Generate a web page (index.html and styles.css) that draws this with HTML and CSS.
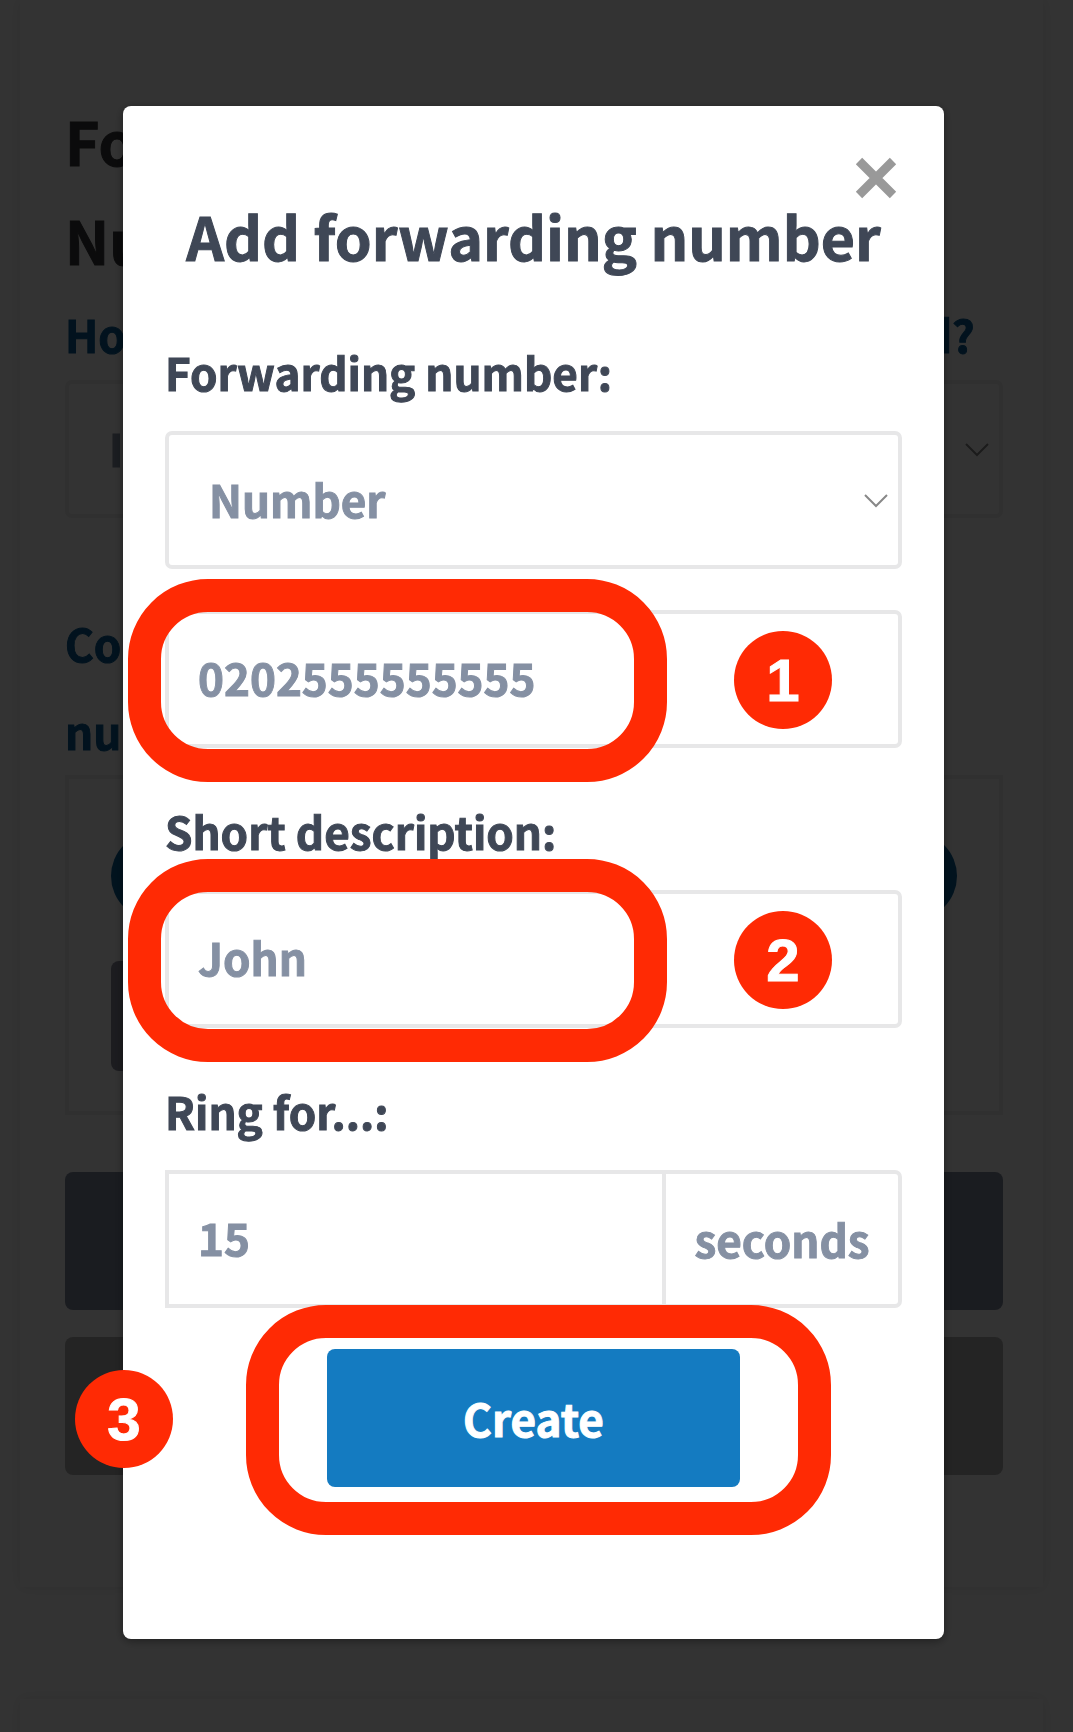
FILE: index.html
```html
<!DOCTYPE html>
<html lang="en">
<head>
<meta charset="utf-8">
<meta name="viewport" content="width=device-width, initial-scale=1">
<title>Add forwarding number</title>
<link rel="stylesheet" href="styles.css">
</head>
<body>
<main class="page" inert>
  <section class="card">
    <h1 class="card-title">Forwarding<br>Numbers</h1>
    <label class="card-label" for="order">How would you like calls to be forwarded?</label>
    <div class="select-wrap">
      <select class="control select" id="order"><option>In order</option></select>
      <svg class="chevron" viewBox="0 0 24 14" aria-hidden="true"><path d="M1 1l11 11L23 1"/></svg>
    </div>
    <h2 class="card-subtitle">Configured forwarding<br>numbers</h2>
    <div class="panel">
      <button class="pill" type="button" aria-label="Number"></button>
      <button class="chip" type="button" aria-label="Edit"></button>
    </div>
    <button class="wide wide-slate" type="button" aria-label="Add"></button>
    <button class="wide wide-grey" type="button" aria-label="Save"></button>
  </section>
  <section class="card card-next"></section>
</main>

<div class="overlay">
  <form class="modal" role="dialog" aria-labelledby="title">
    <button class="close" type="button" aria-label="Close">
      <svg viewBox="0 0 42 42" aria-hidden="true"><path d="M4 4l34 34M38 4L4 38"/></svg>
    </button>
    <h2 class="modal-title" id="title">Add forwarding number</h2>

    <label class="label" for="type">Forwarding number:</label>
    <div class="select-wrap">
      <select class="control select" id="type"><option>Number</option></select>
      <svg class="chevron" viewBox="0 0 24 14" aria-hidden="true"><path d="M1 1l11 11L23 1"/></svg>
    </div>
    <div class="field field-number">
      <input class="control" type="text" value="0202555555555" aria-label="Number">
      <span class="ring"></span>
      <span class="badge">1</span>
    </div>

    <label class="label" for="desc">Short description:</label>
    <div class="field">
      <input class="control" id="desc" type="text" value="John">
      <span class="ring"></span>
      <span class="badge">2</span>
    </div>

    <label class="label" for="ring">Ring for...:</label>
    <div class="group">
      <input class="control group-input" id="ring" type="text" value="15">
      <span class="group-unit">seconds</span>
    </div>

    <div class="actions">
      <button class="create" type="submit">Create</button>
      <span class="ring ring-create"></span>
      <span class="badge badge-create">3</span>
    </div>
  </form>
</div>
</body>
</html>
```
FILE: styles.css
```css
* { box-sizing: border-box; }

body {
  margin: 0;
  background: #fff;
  color: #3f4756;
  font: 700 44px/88px "Noto Sans CJK SC", "Open Sans", sans-serif;
  -webkit-text-stroke: 1px currentColor;
}

h1, h2 { margin: 0; font-weight: 700; }

button, input, select {
  margin: 0;
  border: 0;
  font: inherit;
  color: inherit;
}

/* page behind the dialog */
.page {
  position: fixed;
  inset: 0;
  overflow: hidden;
  padding: 0 30px 0 20px;
}

.card {
  display: flex;
  flex-direction: column;
  padding: 91px 40px 112px 45px;
  background: #fff;
  box-shadow: 0 0 14px rgba(0, 0, 0, .1);
}

.card-next {
  height: 200px;
  margin-top: 112px;
}

.card-title {
  margin-bottom: 1px;
  font-size: 59px;
  line-height: 99px;
  color: #38383c;
}

.card-label, .card-subtitle {
  font-size: 44px;
  color: #0a5c94;
  white-space: nowrap;
}

.card-label { margin-bottom: 2px; }

.card-subtitle {
  margin-top: 81px;
  line-height: 88px;
}

.page .control { border-color: #eee; }

.panel {
  display: flex;
  flex-direction: column;
  align-items: flex-start;
  gap: 41px;
  padding: 53px 42px 40px;
  border: 4px solid #eee;
}

.pill {
  width: 100%;
  height: 88px;
  border-radius: 44px;
  background: #0a6098;
}

.chip {
  width: 300px;
  height: 110px;
  border-radius: 8px;
  background: #8c8c9c;
}

.wide {
  height: 138px;
  border-radius: 8px;
}

.wide-slate { margin-top: 57px; background: #828ca0; }
.wide-grey { margin-top: 27px; background: #b4b4b4; }

/* dialog */
.overlay {
  position: relative;
  min-height: 100vh;
  padding: 106px 129px 92px 123px;
  background: rgba(0, 0, 0, .8);
}

.modal {
  position: relative;
  display: flex;
  flex-direction: column;
  padding: 80px 42px 152px;
  background: #fff;
  border-radius: 8px;
  box-shadow: 0 2px 10px rgba(0, 0, 0, .4);
}

.close {
  position: absolute;
  top: 51px;
  right: 47px;
  width: 42px;
  height: 42px;
  padding: 0;
  background: none;
}

.close svg { display: block; width: 100%; height: 100%; }
.close path { stroke: #999; stroke-width: 9; }

.modal-title {
  margin-bottom: 4px;
  font-size: 59px;
  line-height: 99px;
  text-align: center;
  white-space: nowrap;
}

.label {
  margin-top: 39px;
  margin-bottom: 15px;
}

.control {
  display: block;
  width: 100%;
  height: 138px;
  padding: 0 29px 4px;
  border: 4px solid #e7e7e8;
  border-radius: 7px;
  background: #fff;
  color: #8590a3;
}

.select-wrap, .field, .actions { position: relative; }

.select {
  appearance: none;
  padding: 0 40px 2px;
}

.chevron {
  position: absolute;
  top: 63px;
  right: 14px;
  width: 24px;
  height: 14px;
  fill: none;
  stroke: #888;
  stroke-width: 2;
}

.field-number { margin-top: 41px; }

.group { display: flex; }

.group-input {
  flex: 1;
  min-width: 0;
  border-radius: 0;
}

.group-unit {
  display: flex;
  align-items: center;
  justify-content: center;
  width: 236px;
  border: 4px solid #e7e7e8;
  border-left: 0;
  border-radius: 0 7px 7px 0;
  color: #8590a3;
}

.actions {
  display: flex;
  justify-content: center;
  margin-top: 41px;
}

.create {
  width: 413px;
  height: 138px;
  padding-bottom: 2px;
  border-radius: 8px;
  background: #147bc1;
  color: #fff;
}

/* callouts drawn over the dialog */
.ring {
  position: absolute;
  top: -31px;
  left: -37px;
  width: 539px;
  height: 203px;
  border: 33px solid #ff2a04;
  border-radius: 80px;
  pointer-events: none;
}

.ring-create {
  top: -44px;
  left: 81px;
  width: 585px;
  height: 230px;
}

.badge {
  position: absolute;
  top: 21px;
  right: 70px;
  width: 98px;
  height: 98px;
  border-radius: 50%;
  background: #ff2a04;
  color: #fff;
  font: 700 60px/100px "Liberation Sans", Arial, sans-serif;
  text-align: center;
}

.badge-create { left: -90px; }
```
